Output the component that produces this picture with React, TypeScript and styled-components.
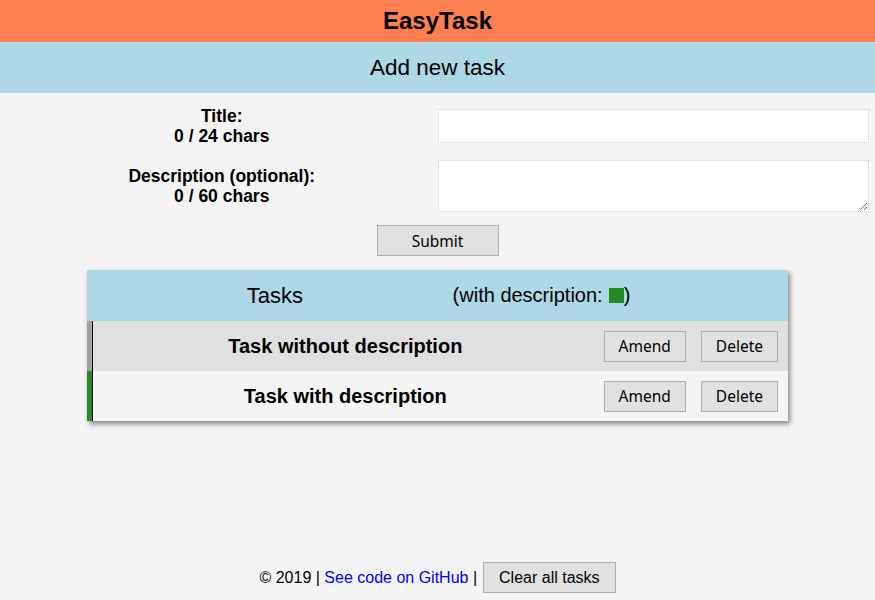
import { useState } from 'react';
import styled, { createGlobalStyle } from 'styled-components';

const GlobalStyle = createGlobalStyle`
  html, body {
    margin: 0;
    padding: 0;
    background: #f4f4f4;
    font-family: "Liberation Sans", Arial, sans-serif;
    color: #000;
  }
`;

const Page = styled.div`
  min-height: 100vh;
  display: flex;
  flex-direction: column;
`;

const Header = styled.header`
  height: 42px;
  background: #ff7f50;
  display: flex;
  align-items: center;
  justify-content: center;
  font-size: 24px;
  font-weight: bold;
`;

const SubHeader = styled.h2`
  margin: 0;
  height: 51px;
  background: #add8e6;
  display: flex;
  align-items: center;
  justify-content: center;
  font-size: 22.5px;
  font-weight: normal;
`;

const Form = styled.form`
  display: grid;
  grid-template-columns: 1fr 1fr;
  align-items: center;
  row-gap: 14px;
  padding-top: 13px;
`;

const Label = styled.label`
  text-align: center;
  padding-left: 6px;
  font-size: 17.5px;
  font-weight: bold;
  line-height: 20px;
`;

const TextInput = styled.input`
  box-sizing: border-box;
  width: 431px;
  height: 34px;
  border: 1px dotted #add8e6;
  background: #fff;
  outline: none;
`;

const TextArea = styled.textarea`
  box-sizing: border-box;
  width: 431px;
  height: 52px;
  border: 1px dotted #add8e6;
  background: #fff;
  outline: none;
  display: block;
`;

const SubmitRow = styled.div`
  grid-column: 1 / 3;
  display: flex;
  justify-content: center;
  margin-top: -1px;
`;

const Button = styled.button<{ $width?: number }>`
  box-sizing: border-box;
  height: 31px;
  padding: 0 14px;
  ${({ $width }) => ($width ? `width: ${$width}px;` : '')}
  background: #e1e1e1;
  border: 1px solid #adadad;
  font-family: "Noto Sans", "Open Sans", sans-serif;
  font-size: 15.5px;
  color: #000;
  cursor: pointer;
`;

const Panel = styled.section`
  width: 701px;
  margin: 14px auto 0;
  box-shadow: 2px 3px 5px rgba(0, 0, 0, 0.45);
`;

const PanelHeader = styled.div`
  height: 51px;
  background: #add8e6;
  display: flex;
  align-items: center;
  justify-content: space-evenly;
`;

const PanelTitle = styled.span`
  font-size: 22px;
  padding-left: 10px;
`;

const Legend = styled.span`
  font-size: 20px;
  display: flex;
  align-items: center;
  margin-right: 8px;
`;

const Swatch = styled.span`
  display: inline-block;
  width: 15px;
  height: 15px;
  margin-left: 6px;
  background: #228b22;
`;

const Row = styled.div<{ $accent: string; $shaded: boolean }>`
  height: 50px;
  display: flex;
  border-left: 5px solid ${({ $accent }) => $accent};
  background: ${({ $shaded }) => ($shaded ? '#e0e0e0' : '#f5f5f5')};
`;

const RowInner = styled.div`
  flex: 1;
  display: flex;
  align-items: center;
  border-left: 1px solid #000;
  padding-right: 10px;
`;

const TaskTitle = styled.span`
  flex: 1;
  text-align: center;
  padding-right: 6px;
  font-size: 20px;
  font-weight: bold;
`;

const Actions = styled.div`
  display: flex;
  gap: 15px;
`;

const Footer = styled.footer`
  margin-top: auto;
  padding-bottom: 7px;
  display: flex;
  justify-content: center;
  align-items: center;
  gap: 6px;
  font-size: 16px;
`;

const Link = styled.a`
  color: #0000ee;
  text-decoration: none;
`;

const ClearButton = styled(Button)`
  font-family: "Liberation Sans", Arial, sans-serif;
  font-size: 16px;
  height: 31px;
  padding: 0 15px;
`;

type Task = { title: string; description: string };

const initialTasks: Task[] = [
  { title: 'Task without description', description: '' },
  { title: 'Task with description', description: 'Some details' },
];

export default function App() {
  const [title, setTitle] = useState('');
  const [description, setDescription] = useState('');
  const [tasks, setTasks] = useState<Task[]>(initialTasks);

  return (
    <Page>
      <GlobalStyle />
      <Header>EasyTask</Header>
      <SubHeader>Add new task</SubHeader>
      <Form onSubmit={(e) => e.preventDefault()}>
        <Label htmlFor="title">
          Title:
          <br />
          {title.length} / 24 chars
        </Label>
        <TextInput
          id="title"
          maxLength={24}
          value={title}
          onChange={(e) => setTitle(e.target.value)}
        />
        <Label htmlFor="description">
          Description (optional):
          <br />
          {description.length} / 60 chars
        </Label>
        <TextArea
          id="description"
          maxLength={60}
          value={description}
          onChange={(e) => setDescription(e.target.value)}
        />
        <SubmitRow>
          <Button type="submit" $width={122}>
            Submit
          </Button>
        </SubmitRow>
      </Form>
      <Panel>
        <PanelHeader>
          <PanelTitle>Tasks</PanelTitle>
          <Legend>
            (with description:
            <Swatch />)
          </Legend>
        </PanelHeader>
        {tasks.map((task, i) => (
          <Row
            key={task.title}
            $accent={task.description ? '#228b22' : '#a0a0a0'}
            $shaded={i % 2 === 0}
          >
            <RowInner>
              <TaskTitle>{task.title}</TaskTitle>
              <Actions>
                <Button type="button">Amend</Button>
                <Button type="button">Delete</Button>
              </Actions>
            </RowInner>
          </Row>
        ))}
      </Panel>
      <Footer>
        <span>
          © 2019 | <Link href="#">See code on GitHub</Link> |
        </span>
        <ClearButton type="button" onClick={() => setTasks([])}>
          Clear all tasks
        </ClearButton>
      </Footer>
    </Page>
  );
}
